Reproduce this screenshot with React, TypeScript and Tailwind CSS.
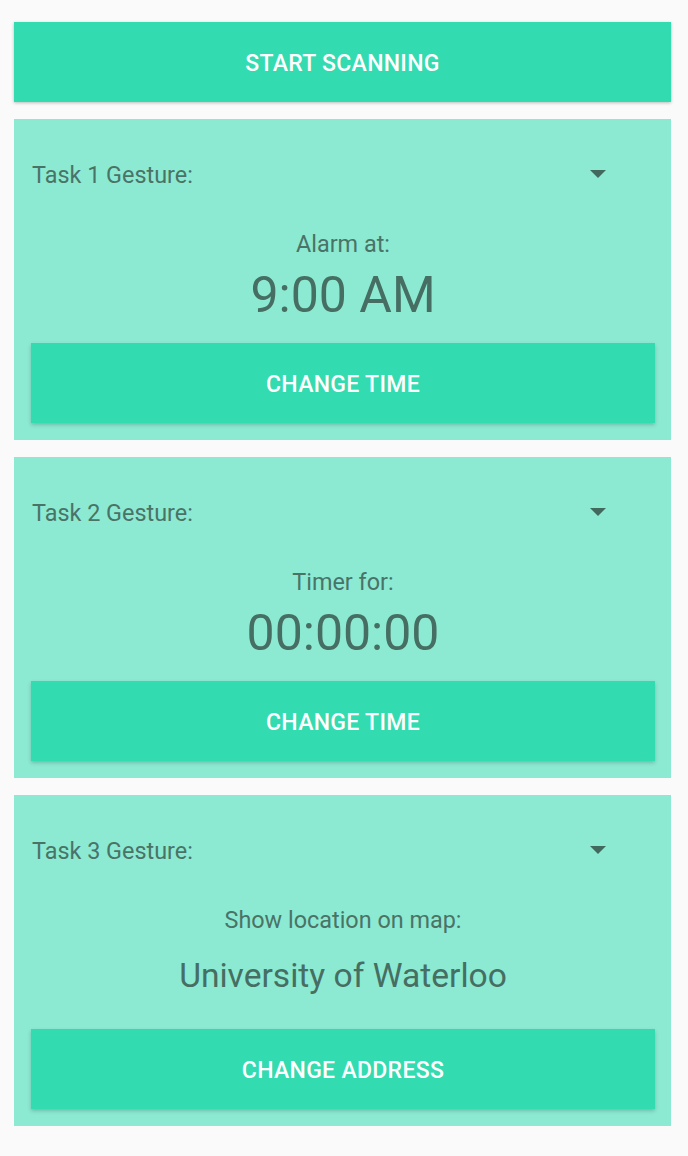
import React from "react";

interface Task {
  id: number;
  label: string;
  value: string;
  valueClass: string;
  valueWrap: string;
  button: string;
  buttonWrap: string;
}

const tasks: Task[] = [
  {
    id: 1,
    label: "Alarm at:",
    value: "9:00 AM",
    valueClass: "text-[50px]",
    valueWrap: "mt-[7px]",
    button: "CHANGE TIME",
    buttonWrap: "mt-[18px]",
  },
  {
    id: 2,
    label: "Timer for:",
    value: "00:00:00",
    valueClass: "text-[50px]",
    valueWrap: "mt-[7px]",
    button: "CHANGE TIME",
    buttonWrap: "mt-[18px]",
  },
  {
    id: 3,
    label: "Show location on map:",
    value: "University of Waterloo",
    valueClass: "text-[33.6px]",
    valueWrap: "mt-[12px]",
    button: "CHANGE ADDRESS",
    buttonWrap: "mt-[23px]",
  },
];

const Button: React.FC<{ text: string }> = ({ text }) => (
  <div className="h-[80px] pt-[5px] bg-[#33dbb1] flex items-center justify-center shadow-[0_2px_4px_rgba(0,0,0,0.2)]">
    <span className="text-white text-[23px] font-medium tracking-[0.3px]">{text}</span>
  </div>
);

const TaskCard: React.FC<{ task: Task }> = ({ task }) => (
  <div className="bg-[#8cead3] pt-[17px] pb-[17px] pl-[17px] pr-[16px]">
    <div className="h-[76px] flex items-center justify-between">
      <span className="text-[23.4px] text-[#4a7367] ml-[1px] pt-[4px]">Task {task.id} Gesture:</span>
      <svg width="16" height="8" viewBox="0 0 16 8" className="mr-[49px]">
        <path d="M0 0 L16 0 L8 8 Z" fill="#42695d" />
      </svg>
    </div>
    <div className="mt-[18px] h-[28px] leading-[28px] text-center text-[23.4px] text-[#4a7367]">
      {task.label}
    </div>
    <div className={`${task.valueWrap} h-[60px] leading-[60px] text-center text-[#466e62] ${task.valueClass}`}>
      {task.value}
    </div>
    <div className={task.buttonWrap}>
      <Button text={task.button} />
    </div>
  </div>
);

const App: React.FC = () => {
  return (
    <div
      className="min-h-screen bg-[#fafafa] pt-[22px] pl-[14px] pr-[17px] pb-[29px] flex flex-col gap-[17px]"
      style={{ fontFamily: "Roboto, 'Liberation Sans', sans-serif" }}
    >
      <div className="h-[80px] pt-[5px] bg-[#33dbb1] flex items-center justify-center shadow-[0_1px_3px_rgba(0,0,0,0.25)]">
        <span className="text-white text-[23px] font-medium tracking-[0.3px]">START SCANNING</span>
      </div>
      {tasks.map((t) => (
        <TaskCard key={t.id} task={t} />
      ))}
    </div>
  );
};

export default App;
